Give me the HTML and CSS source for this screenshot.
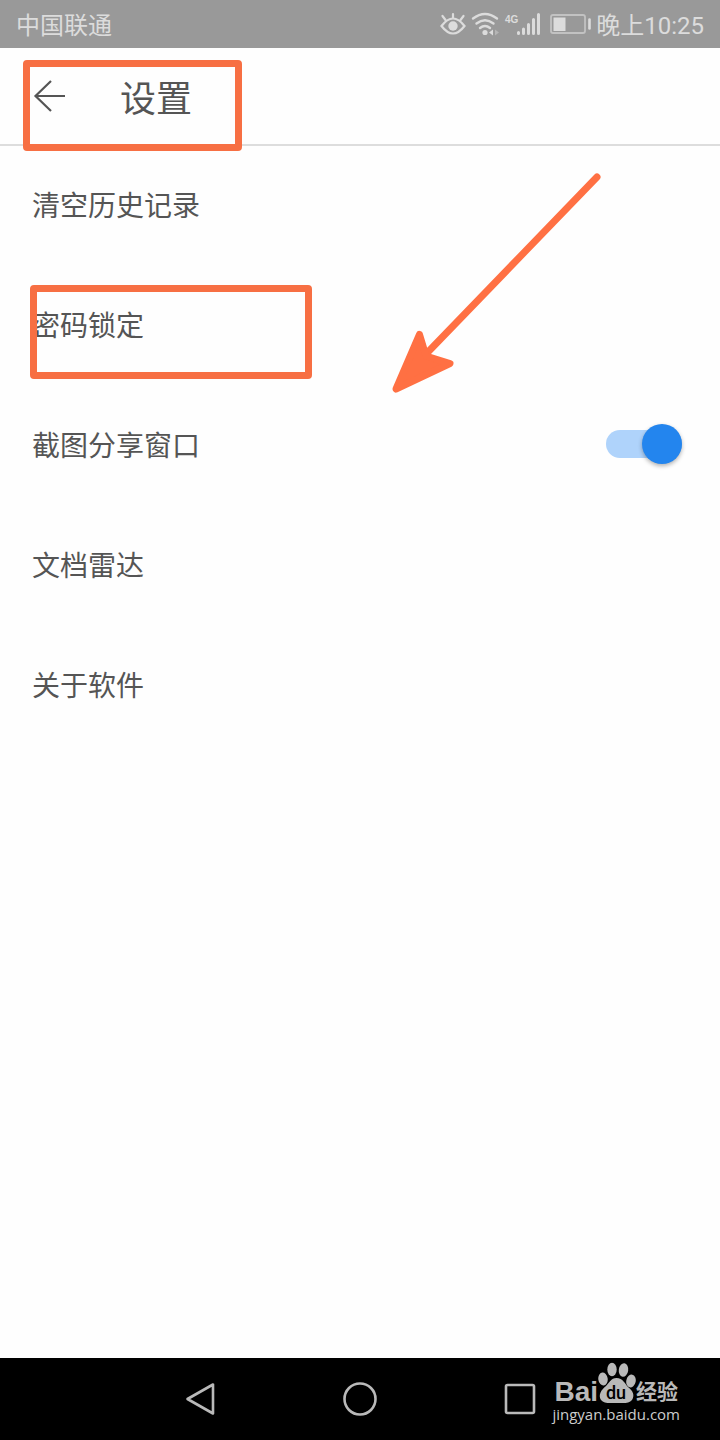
FILE: index.html
```html
<!DOCTYPE html>
<html lang="zh-CN">
<head>
<meta charset="utf-8">
<meta name="viewport" content="width=device-width, initial-scale=1">
<title>设置</title>
<link rel="stylesheet" href="styles.css">
</head>
<body>
<div class="status-bar">
  <span>中国联通</span>
  <div class="status-icons">
    <svg width="152" height="48" viewBox="0 0 152 48" fill="none" stroke="#dcdcdc" aria-hidden="true">
      <path d="M2.500 26Q14 11 25.500 26Q14 41 2.500 26Z" stroke-width="2.200"/>
      <circle cx="14" cy="26" r="4.700" fill="#dcdcdc" stroke="none"/>
      <path d="M14 18v-4M6.500 20l-3-4M21.500 20l3-4" stroke-width="2.200" stroke-linecap="round"/>
      <path d="M34 18.500Q46 9.500 58 18.500M37.500 23.500Q46 17 54.500 23.500M41 28Q46 24 51 28" stroke-width="2.400" stroke-linecap="round"/>
      <circle cx="46" cy="32.500" r="2.600" fill="#dcdcdc" stroke="none"/>
      <path d="M54 29.500v6l-4-3z" fill="#dcdcdc" stroke="none"/>
      <path d="M56 29.500v6l4-3z" fill="#b5b5b5" stroke="none"/>
      <text class="network-label" x="66" y="23" fill="#dcdcdc" stroke="none">4G</text>
      <path d="M79.500 32.500v1M84.500 29v4.500M89.500 24.500v9M94.500 19.500v14M99.500 14.500v19" stroke-width="3" stroke-linecap="round"/>
      <rect x="112" y="15" width="34" height="18" rx="2" stroke="#c2c2c2" stroke-width="1.800"/>
      <rect x="114.500" y="17.500" width="12" height="13.500" fill="#dcdcdc" stroke="none"/>
      <path d="M150.500 19.500v9" stroke-width="2.600" stroke-linecap="round"/>
    </svg>
    <time datetime="22:25">晚上10:25</time>
  </div>
</div>

<header class="app-header">
  <button class="back" type="button" aria-label="返回">
    <svg width="34" height="34" viewBox="0 0 34 34" fill="none" stroke="#555" stroke-width="2.200" aria-hidden="true"><path d="M18 2 2.500 17 18 32M2.500 17H32"/></svg>
  </button>
  <h1>设置</h1>
  <div class="highlight highlight-title"></div>
</header>

<main class="settings">
  <button class="row" type="button">清空历史记录</button>
  <div class="row-wrap">
    <button class="row" type="button">密码锁定</button>
    <div class="highlight highlight-lock"></div>
  </div>
  <label class="row" for="share-window">截图分享窗口
    <input class="switch" id="share-window" type="checkbox" role="switch" checked>
  </label>
  <button class="row" type="button">文档雷达</button>
  <button class="row" type="button">关于软件</button>
  <svg class="arrow" width="212" height="224" viewBox="0 0 212 224" aria-hidden="true">
    <path d="M207 7 38 182" stroke="#ff7043" stroke-width="7" stroke-linecap="round"/>
    <path d="M6 219 29.500 164.500 36 186 60 193.500Z" fill="#ff7043" stroke="#ff7043" stroke-width="7" stroke-linejoin="round"/>
  </svg>
</main>

<nav class="nav-bar" aria-label="系统导航">
  <button type="button" aria-label="返回"><svg width="36" height="36" viewBox="0 0 36 36"><path d="M31 3.500V32.500L5.500 18Z"/></svg></button>
  <button type="button" aria-label="主屏幕"><svg width="36" height="36" viewBox="0 0 36 36"><circle cx="18" cy="18" r="15.500"/></svg></button>
  <button type="button" aria-label="最近任务"><svg width="36" height="36" viewBox="0 0 36 36"><rect x="4" y="4" width="28" height="28" rx="1.500"/></svg></button>
  <div class="watermark">
    <div class="brand">
      <span class="brand-name">Bai</span>
      <svg width="38" height="42" viewBox="0 0 38 42" fill="#b9b9b9" aria-hidden="true">
        <ellipse cx="5" cy="17" rx="4.700" ry="6.500" transform="rotate(-8 5 17)"/>
        <ellipse cx="14" cy="7.500" rx="4.700" ry="6.800"/>
        <ellipse cx="25.500" cy="8" rx="4.700" ry="6.800" transform="rotate(8 25.500 8)"/>
        <ellipse cx="33" cy="19" rx="4.700" ry="6.500" transform="rotate(12 33 19)"/>
        <path d="M18.500 16C25 16 27 22 30 25C35 29 37 33 34 38C31 42 25 41 18.500 41S6 42 3 38C0 33 3 28 8 24C11 21 13 16 18.500 16Z"/>
        <text class="paw-label" x="18" y="37" text-anchor="middle" fill="#000">du</text>
      </svg>
      <span class="brand-suffix">经验</span>
    </div>
    <div class="site">jingyan.baidu.com</div>
  </div>
</nav>
</body>
</html>
```
FILE: styles.css
```css
* { box-sizing: border-box; }

body {
  margin: 0;
  min-height: 100vh;
  display: flex;
  flex-direction: column;
  background: #fefefe;
  color: #555;
  font-family: "Noto Sans CJK SC", sans-serif;
}

button {
  border: 0;
  padding: 0;
  background: none;
  color: inherit;
  font: inherit;
}

.status-bar {
  display: flex;
  justify-content: space-between;
  align-items: center;
  height: 48px;
  padding: 0 16px 2px;
  background: #999;
  color: #dcdcdc;
  font-family: Roboto, "Noto Sans CJK SC", sans-serif;
  font-size: 24px;
}

.status-icons {
  display: flex;
  align-items: center;
  gap: 5px;
}

.status-icons svg { margin-top: 2px; }

.network-label {
  font-family: "Liberation Sans", sans-serif;
  font-size: 10px;
  font-weight: 700;
}

.app-header {
  position: relative;
  display: flex;
  align-items: center;
  gap: 53px;
  height: 98px;
  padding: 0 33px;
  border-bottom: 2px solid #ddd;
}

.back, .back svg { display: block; }

h1 {
  margin: 0;
  font-size: 36px;
  font-weight: 400;
  line-height: 48px;
}

.highlight {
  position: absolute;
  border: 7px solid #f76f43;
  border-radius: 4px;
  pointer-events: none;
}

.highlight-title {
  top: 12px;
  left: 23px;
  width: 219px;
  height: 91px;
}

.highlight-lock {
  top: 19px;
  left: 30px;
  width: 282px;
  height: 94px;
}

.settings {
  position: relative;
  flex: 1;
}

.row-wrap { position: relative; }

.row {
  display: flex;
  justify-content: space-between;
  align-items: center;
  width: 100%;
  height: 120px;
  padding: 0 38px 4px 32px;
  font-size: 28px;
  text-align: left;
}

.switch {
  appearance: none;
  display: flex;
  align-items: center;
  justify-content: flex-end;
  width: 76px;
  height: 28px;
  margin: 0;
  border-radius: 14px;
  background: #afd3fb;
}

.switch::before {
  content: "";
  width: 40px;
  height: 40px;
  border-radius: 50%;
  background: #2385ee;
  box-shadow: 0 2px 4px rgb(0 0 0 / 30%);
}

.switch:not(:checked) {
  justify-content: flex-start;
  background: #ccc;
}

.arrow {
  position: absolute;
  top: 24px;
  left: 390px;
}

.nav-bar {
  position: relative;
  display: flex;
  justify-content: center;
  height: 82px;
  background: #000;
}

.nav-bar button {
  display: grid;
  place-items: center;
  width: 160px;
}

.nav-bar button svg {
  fill: none;
  stroke: #b9b9b9;
  stroke-width: 2.600;
  stroke-linejoin: round;
}

.watermark {
  position: absolute;
  top: 4px;
  right: 40px;
  color: #b9b9b9;
}

.brand {
  display: flex;
  align-items: flex-end;
  justify-content: flex-end;
  height: 42px;
  padding-right: 2px;
  font-weight: 700;
}

.brand-name {
  font-family: "Liberation Sans", sans-serif;
  font-size: 28px;
  line-height: 24px;
}

.paw-label {
  font-family: Roboto, sans-serif;
  font-size: 18px;
  font-weight: 500;
}

.brand-suffix {
  font-size: 21px;
  line-height: 28px;
}

.site {
  color: #ccc;
  font-family: "Open Sans", sans-serif;
  font-size: 15px;
  font-weight: 500;
  line-height: 20px;
}
```
